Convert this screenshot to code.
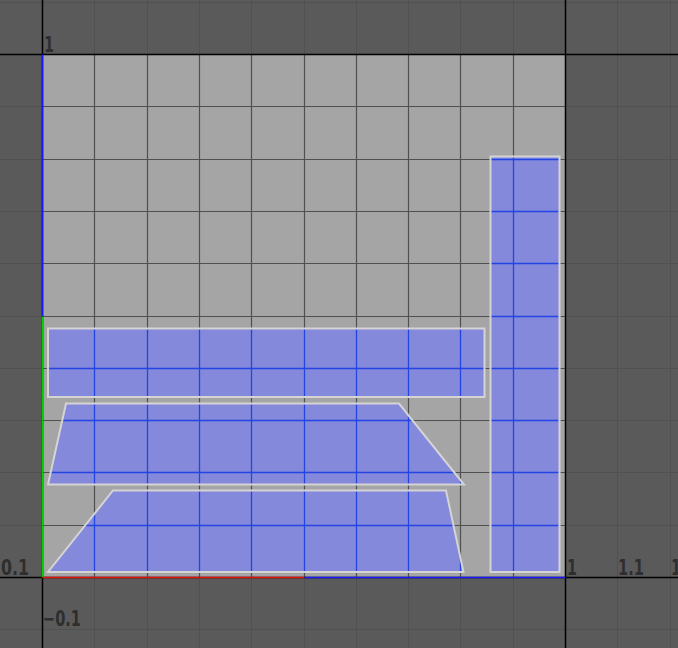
import React from 'react'

// UV editor viewport: unit square with a 0.1 grid and a few UV islands
const ORIGIN_X = 42
const TOP_Y = 54
const STEP = 52.3

const px = (k: number) => Math.round(ORIGIN_X + STEP * k) + 0.5
const py = (k: number) => Math.round(TOP_Y + STEP * k) + 0.5

const islands: string[] = [
  '48,328.5 484.5,328.5 484.5,397 48,397',
  '66,403.5 399,403.5 464,484.5 48,484.5',
  '113,490.5 446,490.5 463.5,572 48,572',
  '490.5,156.5 559.5,156.5 559.5,572 490.5,572',
]

// x, baseline y, text, squeezed width
const labels: [number, number, string, number][] = [
  [44, 52, '1', 10],
  [1, 575, '0.1', 28],
  [567, 575, '1', 10],
  [618, 575, '1.1', 26],
  [671, 575, '1', 10],
  [43, 626, '−0.1', 38],
]

const cols = Array.from({ length: 13 }, (_, i) => i)
const rows = Array.from({ length: 13 }, (_, i) => i - 1)

export default function App() {
  const xs = cols.map(px)
  const ys = rows.map(py)
  const left = px(0)
  const right = px(10)
  const top = py(0)
  const bottom = py(10)

  return (
    <div className="w-[678px] h-[648px] overflow-hidden bg-[#5a5a5a]">
      <svg width={678} height={648} viewBox="0 0 678 648" className="block">
        <defs>
          <clipPath id="islands">
            {islands.map((p, i) => (
              <polygon key={i} points={p} />
            ))}
          </clipPath>
        </defs>

        {/* outer grid */}
        {xs.map((x, i) => (
          <line key={'ov' + i} x1={x} y1={0} x2={x} y2={648} stroke="#515151" strokeWidth={1} />
        ))}
        {ys.map((y, i) => (
          <line key={'oh' + i} x1={0} y1={y} x2={678} y2={y} stroke="#515151" strokeWidth={1} />
        ))}

        {/* image area */}
        <rect x={left} y={top} width={right - left} height={bottom - top} fill="#a5a5a5" />
        {xs.filter((x) => x > left && x < right).map((x, i) => (
          <line key={'iv' + i} x1={x} y1={top} x2={x} y2={bottom} stroke="#505050" strokeWidth={1.2} />
        ))}
        {ys.filter((y) => y > top && y < bottom).map((y, i) => (
          <line key={'ih' + i} x1={left} y1={y} x2={right} y2={y} stroke="#505050" strokeWidth={1.2} />
        ))}

        {/* island fills */}
        {islands.map((p, i) => (
          <polygon key={'f' + i} points={p} fill="#8589db" />
        ))}
        <g clipPath="url(#islands)">
          {xs.map((x, i) => (
            <line key={'bv' + i} x1={x} y1={top} x2={x} y2={bottom} stroke="#2345e2" strokeWidth={1.3} />
          ))}
          {ys.map((y, i) => (
            <line key={'bh' + i} x1={left} y1={y} x2={right} y2={y} stroke="#2345e2" strokeWidth={1.3} />
          ))}
        </g>

        {/* borders */}
        <line x1={left} y1={0} x2={left} y2={648} stroke="#000" strokeWidth={1.5} />
        <line x1={right} y1={0} x2={right} y2={648} stroke="#000" strokeWidth={1.5} />
        <line x1={0} y1={top} x2={678} y2={top} stroke="#000" strokeWidth={1.5} />
        <line x1={0} y1={bottom} x2={678} y2={bottom} stroke="#000" strokeWidth={1.5} />

        {/* axis highlights */}
        <line x1={left} y1={top} x2={left} y2={py(5)} stroke="#1a1aff" strokeWidth={1.5} />
        <line x1={left} y1={py(5)} x2={left} y2={bottom} stroke="#00d000" strokeWidth={1.5} />
        <line x1={left} y1={bottom} x2={px(5)} y2={bottom} stroke="#e01010" strokeWidth={1.5} />
        <line x1={px(5)} y1={bottom} x2={right} y2={bottom} stroke="#1a1aff" strokeWidth={1.5} />

        {/* island outlines */}
        {islands.map((p, i) => (
          <polygon key={'o' + i} points={p} fill="none" stroke="#d4d4d4" strokeWidth={2} />
        ))}

        {/* axis labels */}
        <g className="fill-[#2e2e2e] font-['DejaVu_Sans',sans-serif] text-[21px] font-bold">
          {labels.map(([x, y, t, w]) => (
            <text key={t + x} x={x} y={y} textLength={w} lengthAdjust="spacingAndGlyphs">
              {t}
            </text>
          ))}
        </g>
      </svg>
    </div>
  )
}
